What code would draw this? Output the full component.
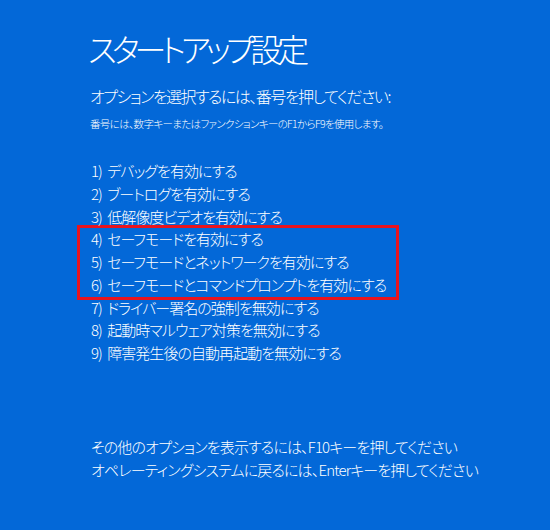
import React from 'react'

const items = [
  '1) デバッグを有効にする',
  '2) ブートログを有効にする',
  '3) 低解像度ビデオを有効にする',
  '4) セーフモードを有効にする',
  '5) セーフモードとネットワークを有効にする',
  '6) セーフモードとコマンドプロンプトを有効にする',
  '7) ドライバー署名の強制を無効にする',
  '8) 起動時マルウェア対策を無効にする',
  '9) 障害発生後の自動再起動を無効にする',
]

function Row({ text }: { text: string }) {
  return <div className="h-[22.75px] leading-[22.75px] whitespace-nowrap">{text}</div>
}

export default function App() {
  return (
    <div className="w-[550px] h-[530px] overflow-hidden bg-[#0368d8] text-white font-light font-['Noto_Sans_CJK_JP','Noto_Sans',sans-serif] [font-feature-settings:'palt']">
      <div className="pl-[88px] pt-[26px]">
        <h1 className="text-[32px] leading-[44px] font-light tracking-[-5px]">スタートアップ設定</h1>
        <p className="mt-[15px] text-[16px] leading-[22px] ml-[2px] tracking-[-1.5px]">オプションを選択するには、番号を押してください:</p>
        <p className="mt-[9px] text-[10.5px] leading-[16px] ml-[2px] tracking-[-0.65px]">番号には、数字キーまたはファンクションキーのF1からF9を使用します。</p>

        <div className="mt-[28px] ml-[3px] text-[15px] tracking-[-0.95px] [word-spacing:3px]">
          {items.slice(0, 3).map((t) => (
            <Row key={t} text={t} />
          ))}
          <div className="-ml-[14px] -my-[3px] w-[322px] border-[3px] border-[#e8141e] pl-[11px]">
            {items.slice(3, 6).map((t) => (
              <Row key={t} text={t} />
            ))}
          </div>
          {items.slice(6).map((t) => (
            <Row key={t} text={t} />
          ))}
        </div>

        <div className="mt-[71px] ml-[3px] text-[15px] tracking-[-0.85px]">
          <Row text="その他のオプションを表示するには、F10キーを押してください" />
          <Row text="オペレーティングシステムに戻るには、Enterキーを押してください" />
        </div>
      </div>
    </div>
  )
}
